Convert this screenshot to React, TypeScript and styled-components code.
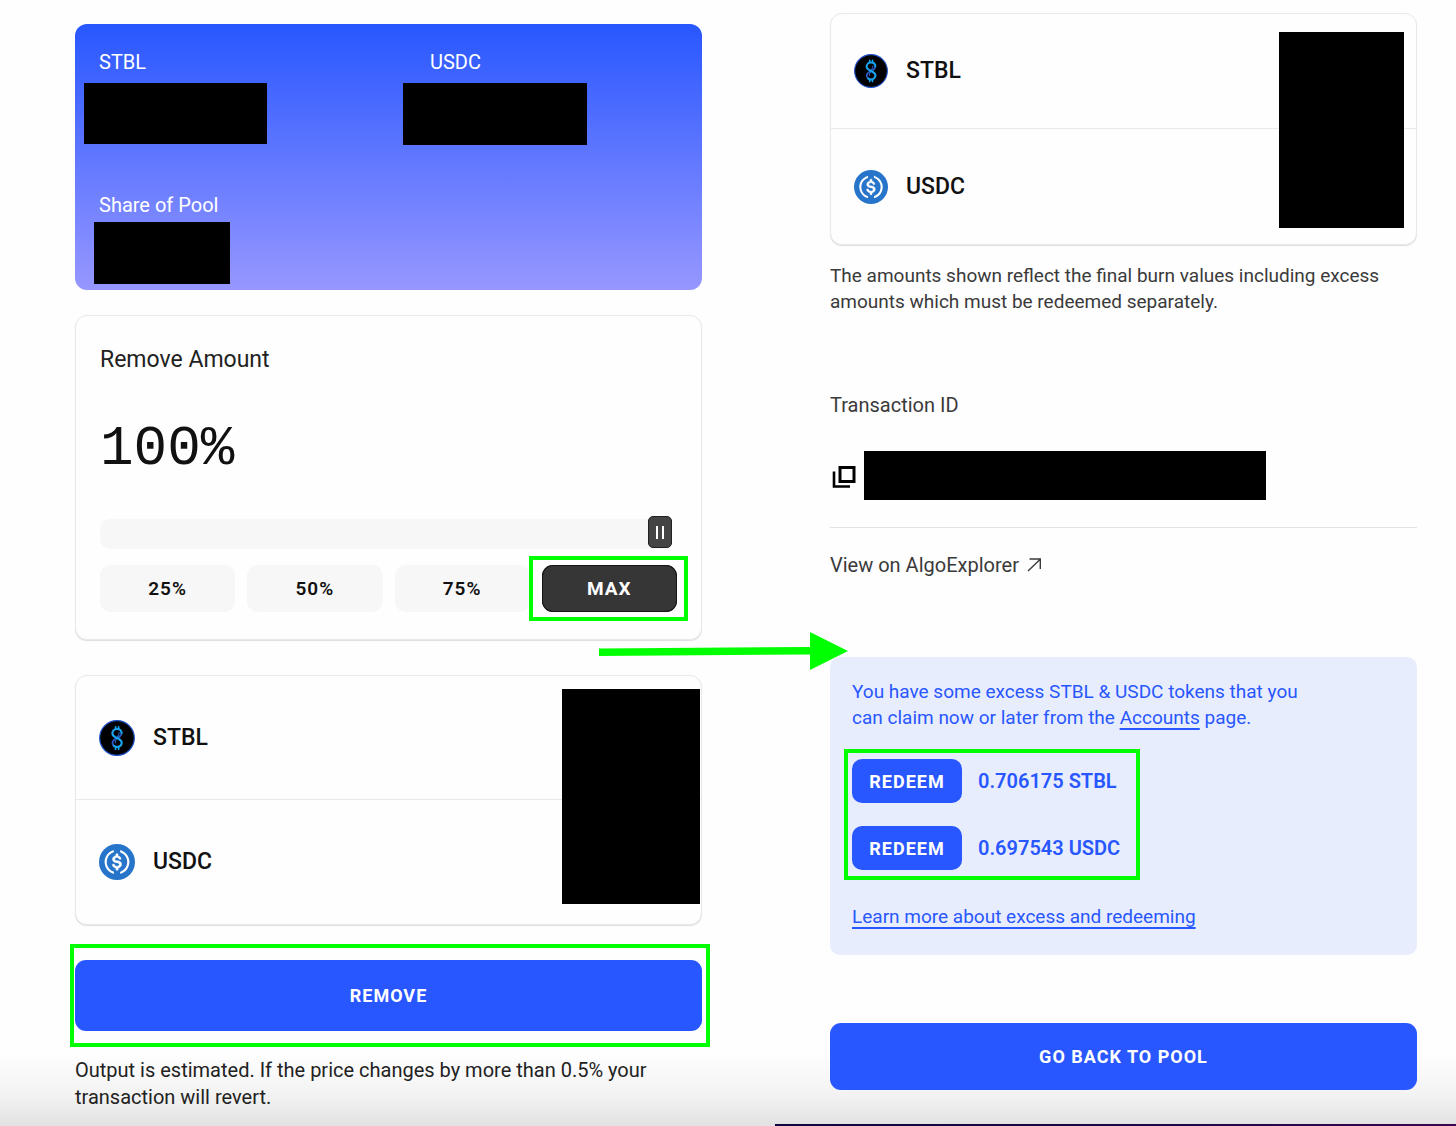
import React, { useState } from 'react';
import styled, { createGlobalStyle, css } from 'styled-components';

const GlobalStyle = createGlobalStyle`
  *, *::before, *::after { box-sizing: border-box; }
  body {
    margin: 0;
    background: #fefefe;
    color: #111;
    font-family: Roboto, "Liberation Sans", sans-serif;
  }
  p, h2 { margin: 0; font-weight: 400; }
  a { color: inherit; }
  button { font-family: inherit; cursor: pointer; }
`;

const BLUE = '#2857ff';
const MARK = '#00ff00';

const Page = styled.main`
  display: grid;
  grid-template-columns: 775fr 681fr;
  min-height: 100vh;
  overflow: hidden;
  background: linear-gradient(to top, #e2e2e2, #f3f3f3 32px, #fefefe 72px);
`;

const RemovePanel = styled.section`
  display: flex;
  flex-direction: column;
  padding: 24px 73px 12px 75px;
`;

const ResultPanel = styled.section`
  display: flex;
  flex-direction: column;
`;

const ResultBody = styled.div`
  display: flex;
  flex-direction: column;
  flex: 1;
  padding: 13px 39px 24px 55px;
`;

const FooterStrip = styled.div`
  height: 2px;
  background: linear-gradient(to right, #0d0540, #1c0448 60%, #3a0250);
`;

const Redaction = styled.span<{ $x: number; $y: number; $w: number; $h: number; $fromRight?: boolean }>`
  position: absolute;
  ${p => (p.$fromRight ? css`right: ${p.$x}px;` : css`left: ${p.$x}px;`)}
  top: ${p => p.$y}px;
  width: ${p => p.$w}px;
  height: ${p => p.$h}px;
  background: #000;
`;

const Highlight = styled.span<{ $v: number; $l: number; $r: number }>`
  position: absolute;
  inset: ${p => `-${p.$v}px -${p.$r}px -${p.$v}px -${p.$l}px`};
  border: 4px solid ${MARK};
  pointer-events: none;
`;

const Marked = styled.div`
  position: relative;
  display: grid;
`;

const PoolCard = styled.div`
  display: grid;
  grid-template-columns: 1fr 1fr;
  gap: 68px 83px;
  padding: 24px;
  border-radius: 12px;
  background: linear-gradient(to bottom, #2857ff, #9797ff);
  color: #fff;
`;

const Stat = styled.div`
  position: relative;
  height: 75px;
  font-size: 20px;
  line-height: 28px;
`;

const Card = styled.div`
  position: relative;
  border: 1px solid #e9e9e9;
  border-radius: 12px;
  background: #fefefe;
  box-shadow: 0 1px 1px #dedede;
`;

const AmountCard = styled(Card)`
  display: flex;
  flex-direction: column;
  margin-top: 25px;
  padding: 28px 24px 27px;
`;

const AmountLabel = styled.label`
  font-size: 23px;
  line-height: 32px;
  color: #222;
`;

const AmountValue = styled.output`
  margin-top: 40px;
  font-family: "Liberation Mono", monospace;
  font-size: 56px;
  line-height: 66px;
`;

const Slider = styled.input`
  appearance: none;
  height: 30px;
  margin: 37px 5px 0 0;
  background: transparent;

  &::-webkit-slider-runnable-track {
    height: 30px;
    border-radius: 10px;
    background: #f7f7f7;
  }
  &::-webkit-slider-thumb {
    appearance: none;
    width: 24px;
    height: 32px;
    margin-top: -3px;
    border: 1px solid #222;
    border-radius: 5px;
    background:
      linear-gradient(#fff, #fff) 7px 9px / 2px 13px no-repeat,
      linear-gradient(#fff, #fff) 13px 9px / 2px 13px no-repeat,
      #444;
  }
`;

const Presets = styled.div`
  display: grid;
  grid-template-columns: repeat(4, 1fr);
  gap: 12px;
  margin-top: 16px;
`;

const PresetButton = styled.button<{ $active: boolean }>`
  height: 47px;
  padding: 0;
  border: 0;
  border-radius: 11px;
  background: ${p => (p.$active ? '#363636' : '#f7f7f7')};
  box-shadow: ${p => (p.$active ? 'inset 0 0 0 1px #151515' : 'none')};
  color: ${p => (p.$active ? '#fff' : '#111')};
  font-size: 19px;
  font-weight: ${p => (p.$active ? 700 : 600)};
  letter-spacing: 1px;
`;

const TokenCard = styled(Card)<{ $row: number }>`
  display: grid;
  grid-auto-rows: ${p => p.$row}px;
`;

const TokenRow = styled.div<{ $icon: number }>`
  display: flex;
  align-items: center;
  gap: 18px;
  padding: 0 23px;
  font-size: 23px;
  font-weight: 500;
  line-height: 32px;

  &:first-child { border-bottom: 1px solid #e9e9e9; }
  svg { width: ${p => p.$icon}px; height: ${p => p.$icon}px; }
`;

const Spaced = styled.div<{ $top: number }>`
  display: grid;
  margin-top: ${p => p.$top}px;
`;

const PrimaryButton = styled.button<{ $height: number }>`
  height: ${p => p.$height}px;
  border: 0;
  border-radius: 11px;
  background: ${BLUE};
  color: #fff;
  font-size: 18px;
  font-weight: 700;
  letter-spacing: 1px;
`;

const Note = styled.p`
  margin-top: 18px;
  font-size: 19px;
  line-height: 26px;
  color: #3a3a3a;
`;

const EstimateNote = styled(Note)`
  margin-top: 26px;
  font-size: 20px;
  line-height: 27px;
  color: #222;
`;

const TransactionTitle = styled.h2`
  margin-top: 77px;
  font-size: 20px;
  line-height: 26px;
  color: #3a3a3a;
`;

const TransactionRow = styled.div`
  display: flex;
  align-items: center;
  gap: 8px;
  margin-top: 33px;
  padding: 0 0 27px 2px;
  border-bottom: 1px solid #e2e2e2;
`;

const CopyButton = styled.button`
  display: flex;
  padding: 3px 0 0;
  border: 0;
  background: none;
`;

const HiddenId = styled.span`
  width: 402px;
  height: 49px;
  background: #000;
`;

const ExplorerLink = styled.a`
  display: flex;
  align-items: center;
  align-self: flex-start;
  gap: 8px;
  margin-top: 24px;
  font-size: 20px;
  line-height: 26px;
  color: #3a3a3a;
  text-decoration: none;
`;

const ExcessCard = styled.div`
  position: relative;
  display: flex;
  flex-direction: column;
  align-items: flex-start;
  margin-top: 79px;
  padding: 22px 22px 25px;
  border-radius: 10px;
  background: #e8edfe;
  color: ${BLUE};
  font-size: 19px;
  line-height: 26px;

  a { text-underline-offset: 4px; text-decoration-thickness: 2px; }
`;

const ExcessText = styled.p`
  max-width: 460px;
`;

const Claims = styled.div`
  position: relative;
  display: grid;
  gap: 23px;
  margin: 28px 0 34px;
`;

const Claim = styled.div`
  display: flex;
  align-items: center;
  gap: 16px;
  font-size: 20px;
  font-weight: 600;
`;

const RedeemButton = styled.button`
  width: 110px;
  height: 44px;
  padding: 0;
  border: 0;
  border-radius: 10px;
  background: ${BLUE};
  color: #fff;
  font-size: 18px;
  font-weight: 700;
  letter-spacing: 1px;
`;

const FlowArrow = styled.svg`
  position: absolute;
  left: -231px;
  top: -25px;
  width: 249px;
  height: 38px;
  pointer-events: none;
`;

const StblIcon = () => (
  <svg viewBox="0 0 36 36" aria-hidden="true">
    <circle cx="18" cy="18" r="17.3" fill="#000" stroke="#1c4fc4" strokeWidth="1.2" />
    <g fill="none" strokeLinecap="round">
      <path d="M22.500 13.400c0 4.600-9 4.600-9 9.200 0 2.600 2 4.400 4.500 4.400" stroke="#2a5cc4" strokeWidth="1.900" />
      <path d="M20.200 12.500c-.3 3.500-3.600 5.500-4 10.500" stroke="#2a5cc4" strokeWidth="1.100" />
      <path d="M22.600 13c0-2.400-2-4-4.600-4s-4.600 1.800-4.600 4.400c0 4.600 9.300 4.600 9.300 9.200 0 2.600-2 4.400-4.700 4.400-1.200 0-2.200-.3-3-1" stroke="#18a4ee" strokeWidth="2.200" />
      <path d="M16.600 6.800v2M19.600 6.800v2M16.600 27.200v2M19.600 27.200v2" stroke="#18a4ee" strokeWidth="1.700" />
    </g>
  </svg>
);

const UsdcIcon = () => (
  <svg viewBox="0 0 32 32" aria-hidden="true">
    <circle cx="16" cy="16" r="16" fill="#2775ca" />
    <g fill="#fff">
      <path d="M20.022 18.124c0-2.124-1.28-2.852-3.84-3.156-1.828-.243-2.193-.728-2.193-1.578 0-.85.61-1.396 1.828-1.396 1.097 0 1.707.364 2.011 1.275a.458.458 0 00.427.303h.975a.416.416 0 00.427-.425v-.06a3.04 3.04 0 00-2.743-2.489V9.142c0-.243-.183-.425-.487-.486h-.915c-.243 0-.426.182-.487.486v1.396c-1.829.242-2.986 1.456-2.986 2.974 0 2.002 1.218 2.791 3.778 3.095 1.707.303 2.255.668 2.255 1.639 0 .97-.853 1.638-2.011 1.638-1.585 0-2.133-.667-2.316-1.578-.06-.242-.244-.364-.427-.364h-1.036a.416.416 0 00-.426.425v.06c.243 1.518 1.219 2.61 3.23 2.914v1.457c0 .242.183.425.487.485h.915c.243 0 .426-.182.487-.485V21.34c1.829-.303 3.047-1.578 3.047-3.217z" stroke="#fff" strokeWidth=".5" />
      <path d="M12.892 24.497c-4.754-1.7-7.192-6.98-5.424-11.653.914-2.55 2.925-4.491 5.424-5.402.244-.121.365-.303.365-.607v-.85c0-.242-.121-.424-.365-.485-.061 0-.183 0-.244.06a10.895 10.895 0 00-7.13 13.717c1.096 3.4 3.717 6.01 7.13 7.102.244.121.488 0 .548-.243.061-.06.061-.122.061-.243v-.85c0-.182-.182-.424-.365-.546zm6.46-18.936c-.244-.122-.488 0-.548.242-.061.061-.061.122-.061.243v.85c0 .243.182.485.365.607 4.754 1.7 7.192 6.98 5.424 11.653-.914 2.55-2.925 4.491-5.424 5.402-.244.121-.365.303-.365.607v.85c0 .242.121.424.365.485.061 0 .183 0 .244-.06a10.895 10.895 0 007.13-13.717c-1.096-3.46-3.778-6.07-7.13-7.162z" />
    </g>
  </svg>
);

const CopyIcon = () => (
  <svg width="24" height="24" viewBox="0 0 24 24" fill="none" stroke="#000" strokeWidth="3" aria-hidden="true">
    <path d="M8 2.500h14v14H8z" />
    <path d="M2 6.500V21.500H18" strokeWidth="2.600" />
  </svg>
);

const ExternalIcon = () => (
  <svg width="14" height="14" viewBox="0 0 14 14" fill="none" stroke="#3a3a3a" strokeWidth="1.400" aria-hidden="true">
    <path d="M1 13L13 1.500M2.500 1H13.300V11" />
  </svg>
);

const PRESETS = [
  { label: '25%', value: 25 },
  { label: '50%', value: 50 },
  { label: '75%', value: 75 },
  { label: 'MAX', value: 100 },
];

const CLAIMS = ['0.706175 STBL', '0.697543 USDC'];

function Tokens({ row, icon, children }: { row: number; icon: number; children: React.ReactNode }) {
  return (
    <TokenCard $row={row}>
      <TokenRow $icon={icon}><StblIcon />STBL</TokenRow>
      <TokenRow $icon={icon}><UsdcIcon />USDC</TokenRow>
      {children}
    </TokenCard>
  );
}

export default function App() {
  const [percent, setPercent] = useState(100);

  return (
    <>
      <GlobalStyle />
      <Page>
        <RemovePanel>
          <PoolCard>
            <Stat>STBL<Redaction $x={-15} $y={35} $w={183} $h={61} /></Stat>
            <Stat>USDC<Redaction $x={-27} $y={35} $w={184} $h={62} /></Stat>
            <Stat>Share of Pool<Redaction $x={-5} $y={31} $w={136} $h={62} /></Stat>
          </PoolCard>

          <AmountCard>
            <AmountLabel htmlFor="amount">Remove Amount</AmountLabel>
            <AmountValue htmlFor="amount">{percent}%</AmountValue>
            <Slider
              id="amount"
              type="range"
              min={0}
              max={100}
              value={percent}
              onChange={e => setPercent(Number(e.target.value))}
            />
            <Presets>
              {PRESETS.map(({ label, value }) => (
                <Marked key={label}>
                  <PresetButton type="button" $active={percent === value} onClick={() => setPercent(value)}>
                    {label}
                  </PresetButton>
                  {value === 100 && <Highlight $v={9} $l={13} $r={11} />}
                </Marked>
              ))}
            </Presets>
          </AmountCard>

          <Spaced $top={35}>
            <Tokens row={124} icon={36}>
              <Redaction $fromRight $x={1} $y={13} $w={138} $h={215} />
            </Tokens>
          </Spaced>

          <Spaced $top={35}>
            <Marked>
              <PrimaryButton type="button" $height={71}>REMOVE</PrimaryButton>
              <Highlight $v={16} $l={5} $r={8} />
            </Marked>
          </Spaced>
          <EstimateNote>
            Output is estimated. If the price changes by more than 0.5% your transaction will revert.
          </EstimateNote>
        </RemovePanel>

        <ResultPanel>
          <ResultBody>
            <Tokens row={115} icon={34}>
              <Redaction $fromRight $x={12} $y={18} $w={125} $h={196} />
            </Tokens>
            <Note>
              The amounts shown reflect the final burn values including excess amounts which must be redeemed
              separately.
            </Note>

            <TransactionTitle>Transaction ID</TransactionTitle>
            <TransactionRow>
              <CopyButton type="button" aria-label="Copy transaction ID"><CopyIcon /></CopyButton>
              <HiddenId />
            </TransactionRow>
            <ExplorerLink href="#explorer">View on AlgoExplorer <ExternalIcon /></ExplorerLink>

            <ExcessCard>
              <ExcessText>
                You have some excess STBL &amp; USDC tokens that you
                <br />
                can claim now or later from the <a href="#accounts">Accounts</a> page.
              </ExcessText>
              <Claims>
                {CLAIMS.map(amount => (
                  <Claim key={amount}>
                    <RedeemButton type="button">REDEEM</RedeemButton>
                    {amount}
                  </Claim>
                ))}
                <Highlight $v={10} $l={8} $r={20} />
              </Claims>
              <a href="#learn">Learn more about excess and redeeming</a>
              <FlowArrow viewBox="0 0 249 38" aria-hidden="true">
                <path d="M0 16.500L211 15V0L249 19L211 38V22.500L0 24z" fill={MARK} />
              </FlowArrow>
            </ExcessCard>

            <Spaced $top={68}>
              <PrimaryButton type="button" $height={67}>GO BACK TO POOL</PrimaryButton>
            </Spaced>
          </ResultBody>
          <FooterStrip />
        </ResultPanel>
      </Page>
    </>
  );
}
